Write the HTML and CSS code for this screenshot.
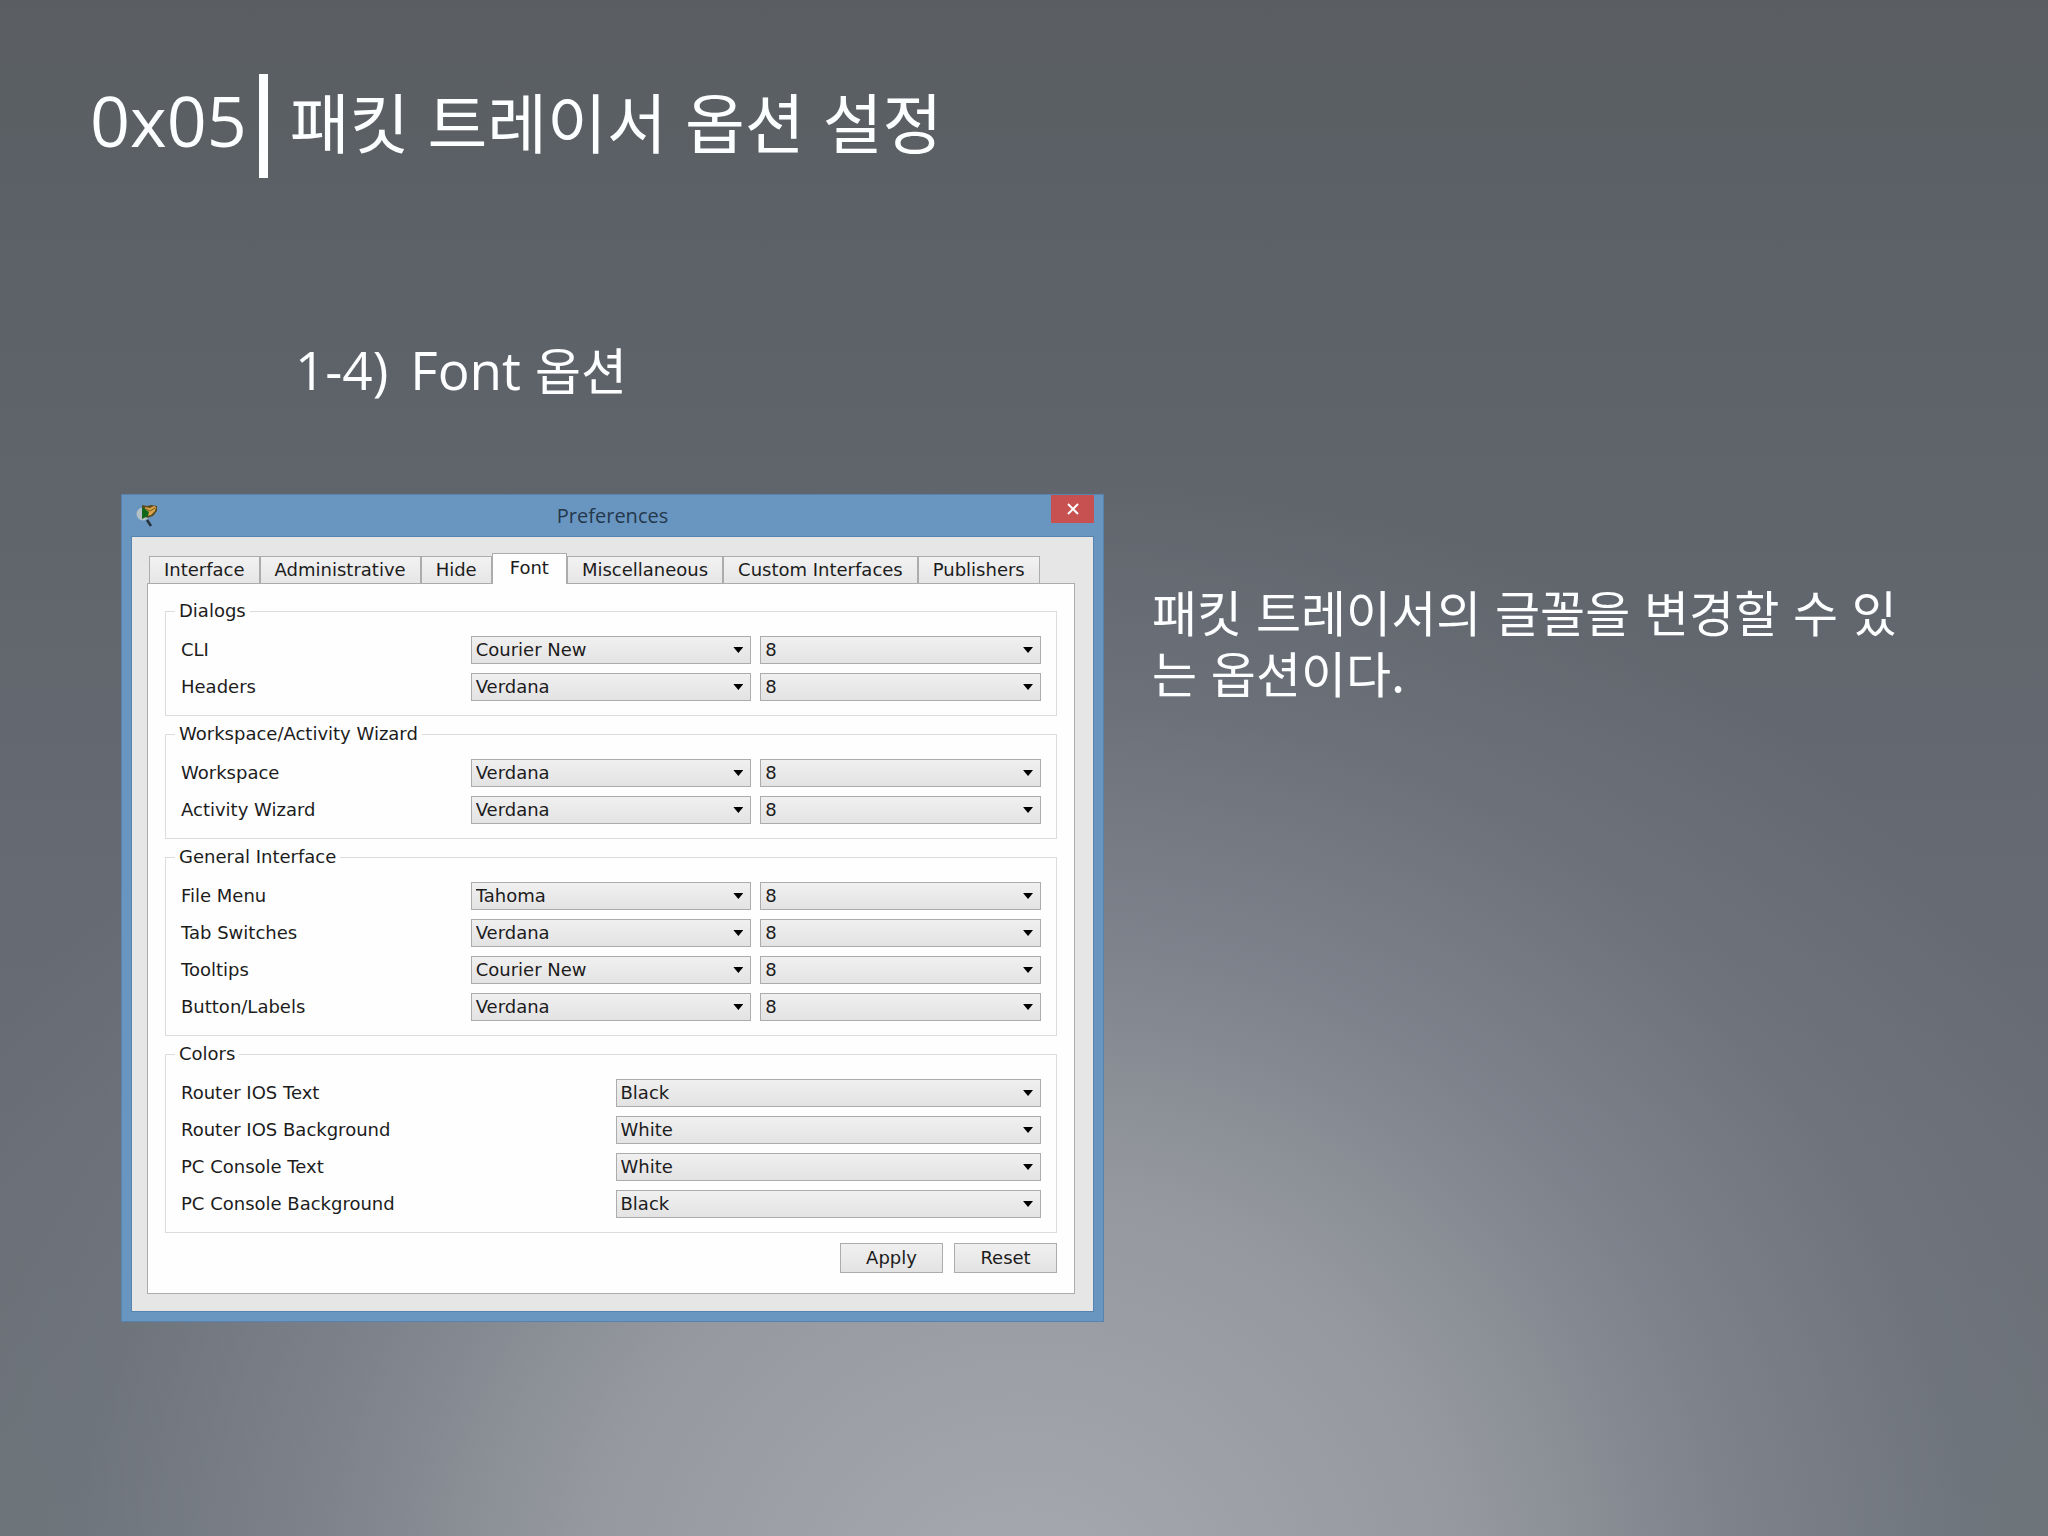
FILE: index.html
```html
<!DOCTYPE html>
<html lang="ko">
<head>
    <meta charset="UTF-8">
    <meta name="viewport" content="width=device-width, initial-scale=1.0">
    <title>패킷 트레이서 옵션 설정</title>
    <link rel="stylesheet" href="styles.css">
</head>
<body>
    <header class="slide-header">
        <span class="chapter">0x05</span>
        <span class="divider"></span>
        <h1>패킷 트레이서 옵션 설정</h1>
    </header>

    <main>
        <h2><span class="latin number">1-4)</span> <span class="latin">Font</span> 옵션</h2>

        <div class="content">
            <section class="window" lang="en">
                <div class="title-bar">
                    <svg class="app-icon" viewBox="0 0 22 24" aria-hidden="true">
                        <circle cx="7" cy="10" r="6.5" fill="#b4bfc6"/>
                        <path d="M11 16l4 6" stroke="#26323a" stroke-width="2.5"/>
                        <path d="M6 1l5 1 4-1 6 1v5l-4 5-6 2-5-6z" fill="#5b4a1e"/>
                        <path d="M9 3l5 1 4-2 2 1-1 4-4 4-4 1z" fill="#d9a548"/>
                        <path d="M10 5l4 2 5-3" stroke="#775c22" fill="none"/>
                        <path d="M6 3l7 5-1 4-6 3z" fill="#10671c"/>
                    </svg>
                    <span class="window-title">Preferences</span>
                    <button type="button" class="close" aria-label="Close">
                        <svg viewBox="0 0 12 12"><path d="M1 1l10 10M11 1L1 11" stroke="#fff" stroke-width="2"/></svg>
                    </button>
                </div>

                <div class="client">
                    <div class="tabs" role="tablist">
                        <button type="button" role="tab">Interface</button>
                        <button type="button" role="tab">Administrative</button>
                        <button type="button" role="tab">Hide</button>
                        <button type="button" role="tab" class="active" aria-selected="true">Font</button>
                        <button type="button" role="tab">Miscellaneous</button>
                        <button type="button" role="tab">Custom Interfaces</button>
                        <button type="button" role="tab">Publishers</button>
                    </div>

                    <form class="panel">
                        <fieldset>
                            <legend>Dialogs</legend>
                            <div class="row">
                                <label for="cli">CLI</label>
                                <div class="select"><select id="cli"><option>Courier New</option></select></div>
                                <div class="select"><select aria-label="CLI size"><option>8</option></select></div>
                            </div>
                            <div class="row">
                                <label for="headers">Headers</label>
                                <div class="select"><select id="headers"><option>Verdana</option></select></div>
                                <div class="select"><select aria-label="Headers size"><option>8</option></select></div>
                            </div>
                        </fieldset>

                        <fieldset>
                            <legend>Workspace/Activity Wizard</legend>
                            <div class="row">
                                <label for="workspace">Workspace</label>
                                <div class="select"><select id="workspace"><option>Verdana</option></select></div>
                                <div class="select"><select aria-label="Workspace size"><option>8</option></select></div>
                            </div>
                            <div class="row">
                                <label for="wizard">Activity Wizard</label>
                                <div class="select"><select id="wizard"><option>Verdana</option></select></div>
                                <div class="select"><select aria-label="Activity Wizard size"><option>8</option></select></div>
                            </div>
                        </fieldset>

                        <fieldset>
                            <legend>General Interface</legend>
                            <div class="row">
                                <label for="fileMenu">File Menu</label>
                                <div class="select"><select id="fileMenu"><option>Tahoma</option></select></div>
                                <div class="select"><select aria-label="File Menu size"><option>8</option></select></div>
                            </div>
                            <div class="row">
                                <label for="tabSwitches">Tab Switches</label>
                                <div class="select"><select id="tabSwitches"><option>Verdana</option></select></div>
                                <div class="select"><select aria-label="Tab Switches size"><option>8</option></select></div>
                            </div>
                            <div class="row">
                                <label for="tooltips">Tooltips</label>
                                <div class="select"><select id="tooltips"><option>Courier New</option></select></div>
                                <div class="select"><select aria-label="Tooltips size"><option>8</option></select></div>
                            </div>
                            <div class="row">
                                <label for="buttonLabels">Button/Labels</label>
                                <div class="select"><select id="buttonLabels"><option>Verdana</option></select></div>
                                <div class="select"><select aria-label="Button/Labels size"><option>8</option></select></div>
                            </div>
                        </fieldset>

                        <fieldset>
                            <legend>Colors</legend>
                            <div class="row wide">
                                <label for="iosText">Router IOS Text</label>
                                <div class="select"><select id="iosText"><option>Black</option></select></div>
                            </div>
                            <div class="row wide">
                                <label for="iosBackground">Router IOS Background</label>
                                <div class="select"><select id="iosBackground"><option>White</option></select></div>
                            </div>
                            <div class="row wide">
                                <label for="pcText">PC Console Text</label>
                                <div class="select"><select id="pcText"><option>White</option></select></div>
                            </div>
                            <div class="row wide">
                                <label for="pcBackground">PC Console Background</label>
                                <div class="select"><select id="pcBackground"><option>Black</option></select></div>
                            </div>
                        </fieldset>

                        <div class="actions">
                            <button type="button">Apply</button>
                            <button type="reset">Reset</button>
                        </div>
                    </form>
                </div>
            </section>

            <p class="description">패킷 트레이서의 글꼴을 변경할 수 있는 옵션이다.</p>
        </div>
    </main>
</body>
</html>
```
FILE: styles.css
```css
* {
    box-sizing: border-box;
}
body {
    margin: 0;
    min-height: 100vh;
    padding: 74px 136px 0 88px;
    color: #fcfeff;
    font-family: "Noto Sans CJK KR", sans-serif;
    background:
        radial-gradient(ellipse 58% 76% at 50% 106%, #a8aab2 0%, #95989e 38%, rgba(128, 133, 143, 0.85) 60%, rgba(115, 120, 130, 0.5) 80%, rgba(108, 114, 122, 0) 100%),
        linear-gradient(#5a5e62 0%, #5e636a 25%, #646971 50%, #696e76 75%, #6a7276 100%);
}
h1, h2, p {
    margin: 0;
    font-weight: 400;
}
.slide-header {
    display: flex;
    align-items: flex-start;
    height: 104px;
}
.chapter {
    padding-left: 2px;
    font: 70px/92px "Open Sans", sans-serif;
}
.divider {
    width: 9px;
    height: 104px;
    margin: 0 22px 0 12px;
    background: #fcfeff;
}
h1 {
    font-size: 65px;
    line-height: 92px;
}
h2 {
    margin: 155px 0 89px 207px;
    font-size: 50px;
    line-height: 70px;
}
.latin {
    font-family: "Open Sans", sans-serif;
    font-size: 53px;
}
.number {
    margin-right: 8px;
}
.content {
    display: flex;
    align-items: flex-start;
    gap: 48px;
    margin-left: 33px;
}
.description {
    flex: 1;
    margin-top: 86px;
    font-size: 49px;
    line-height: 61px;
    word-break: break-all;
}

/* preferences window */
.window {
    width: 48vw;
    padding: 0 9px 9px;
    border: 1px solid #5784ad;
    background: #6996c1;
    color: #1c1c1c;
    font: 18px/20px "DejaVu Sans", Verdana, sans-serif;
}
.title-bar {
    display: grid;
    grid-template-columns: 1fr auto 1fr;
    align-items: center;
    height: 41px;
}
.app-icon {
    width: 22px;
    height: 24px;
    margin-left: 5px;
}
.window-title {
    color: #24384c;
    font: 20px/28px "Open Sans", sans-serif;
}
.close {
    display: flex;
    align-items: center;
    justify-content: center;
    place-self: start end;
    width: 43px;
    height: 28px;
    border: 0;
    background: #c75050;
}
.close svg {
    width: 12px;
    height: 12px;
}
.client {
    padding: 16px 18px 17px 15px;
    border: 1px solid #5784ad;
    background: #e7e6e7;
}
.tabs {
    display: flex;
    align-items: flex-end;
    margin-left: 2px;
}
.tabs button {
    height: 27px;
    padding: 0 14px;
    border: 1px solid #acacac;
    border-bottom: 0;
    background: linear-gradient(#f2f2f2, #e6e6e6);
    color: inherit;
    font: inherit;
}
.tabs .active {
    height: 31px;
    margin-bottom: -1px;
    padding: 0 17px 3px;
    background: #fefefe;
    z-index: 1;
}
.panel {
    padding: 17px 17px 20px;
    border: 1px solid #acacac;
    background: #fefefe;
}
fieldset {
    display: grid;
    gap: 9px;
    margin: 0 0 8px;
    padding: 15px 15px 14px;
    border: 1px solid #dcdcdc;
}
legend {
    margin-left: -6px;
    padding: 0 4px;
}
.row {
    display: grid;
    grid-template-columns: repeat(3, 1fr);
    align-items: center;
    gap: 9px;
}
.wide {
    grid-template-columns: repeat(2, 1fr);
}
.select {
    display: grid;
    align-items: center;
}
.select select {
    grid-area: 1 / 1;
    height: 28px;
    padding: 0 4px;
    border: 1px solid #acacac;
    border-radius: 0;
    appearance: none;
    background: linear-gradient(#f0f0f0, #e4e3e4);
    color: inherit;
    font: inherit;
}
.select::after {
    content: "";
    grid-area: 1 / 1;
    justify-self: end;
    width: 10px;
    height: 6px;
    margin-right: 8px;
    background: #000;
    clip-path: polygon(0 0, 100% 0, 50% 100%);
    pointer-events: none;
}
.actions {
    display: flex;
    justify-content: flex-end;
    gap: 11px;
    margin-top: 10px;
}
.actions button {
    width: 103px;
    height: 30px;
    border: 1px solid #acacac;
    background: linear-gradient(#f0f0f0, #e4e3e4);
    color: inherit;
    font: inherit;
}
```
